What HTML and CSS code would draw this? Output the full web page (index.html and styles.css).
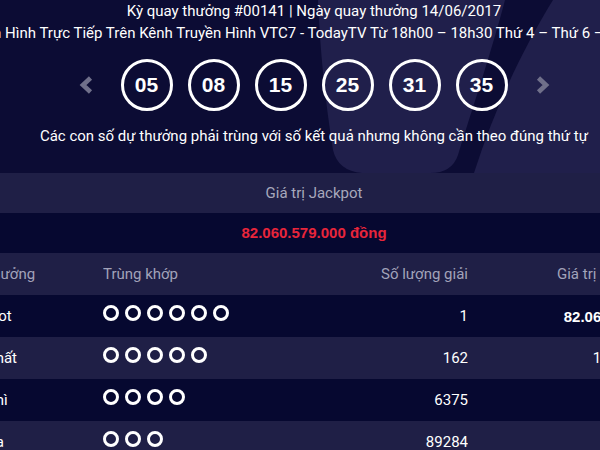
FILE: index.html
```html
<!DOCTYPE html>
<html lang="vi">
<head>
<meta charset="utf-8">
<title>Kết quả Vietlott</title>
<link rel="stylesheet" href="styles.css">
</head>
<body>
<div class="page">
  <section class="top">
    <svg class="deco" width="628" height="173" viewBox="0 0 628 173">
      <path d="M318,0 L505,0 C492,50 472,110 458,155 Q452,173 430,173 L362,173 Q338,171 333,150 C325,100 320,50 318,0 Z" fill="#201f4b"/>
      <path d="M553,0 L628,0 L628,173 L474,173 C494,110 522,50 553,0 Z" fill="#201f4b"/>
    </svg>
    <div class="title">Kỳ quay thưởng #00141 | Ngày quay thưởng 14/06/2017</div>
    <div class="subtitle"><span>Qua Hình Trực Tiếp Trên Kênh Truyền Hình VTC7 - TodayTV Từ 18h00 – 18h30 Thứ 4 – Thứ 6 – Chủ Nhật</span></div>
    <div class="nav">
      <svg class="chev" width="14" height="18" viewBox="0 0 14 18"><polyline points="11.5,2 4,9 11.5,16" fill="none" stroke="#70708a" stroke-width="4.6"/></svg>
      <div class="balls">
        <span class="ball">05</span>
        <span class="ball">08</span>
        <span class="ball">15</span>
        <span class="ball">25</span>
        <span class="ball">31</span>
        <span class="ball">35</span>
      </div>
      <svg class="chev" width="14" height="18" viewBox="0 0 14 18"><polyline points="2.5,2 10,9 2.5,16" fill="none" stroke="#70708a" stroke-width="4.6"/></svg>
    </div>
    <div class="note">Các con số dự thưởng phải trùng với số kết quả nhưng không cần theo đúng thứ tự</div>
  </section>
  <div class="jp-head">Giá trị Jackpot</div>
  <div class="jp-value">82.060.579.000 đồng</div>
  <table class="prizes">
    <colgroup>
      <col class="c1"><col class="c2"><col class="c3"><col class="c4">
    </colgroup>
    <thead>
      <tr><th class="name">Giải thưởng</th><th class="match">Trùng khớp</th><th class="num">Số lượng giải</th><th class="val-head">Giá trị giải (đồng)</th></tr>
    </thead>
    <tbody>
      <tr class="dark"><td class="name">Jackpot</td><td class="match"><span class="dot"></span><span class="dot"></span><span class="dot"></span><span class="dot"></span><span class="dot"></span><span class="dot"></span></td><td class="num">1</td><td class="val strong">82.060.579.000</td></tr>
      <tr class="light"><td class="name">Giải nhất</td><td class="match"><span class="dot"></span><span class="dot"></span><span class="dot"></span><span class="dot"></span><span class="dot"></span></td><td class="num">162</td><td class="val">10.000.000</td></tr>
      <tr class="dark"><td class="name">Giải nhì</td><td class="match"><span class="dot"></span><span class="dot"></span><span class="dot"></span><span class="dot"></span></td><td class="num">6375</td><td class="val">300.000</td></tr>
      <tr class="light"><td class="name">Giải ba</td><td class="match"><span class="dot"></span><span class="dot"></span><span class="dot"></span></td><td class="num">89284</td><td class="val">30.000</td></tr>
    </tbody>
  </table>
</div>
</body>
</html>
```
FILE: styles.css
```css
html, body {
  margin: 0;
  padding: 0;
}
body {
  background: #0c0c34;
  color: #ffffff;
  font-family: Roboto, "Liberation Sans", sans-serif;
  font-size: 15px;
  overflow: hidden;
  width: 600px;
  height: 450px;
}
.page {
  width: 628px;
  overflow: hidden;
}
.top {
  position: relative;
  overflow: hidden;
  padding-bottom: 26px;
}
.deco {
  position: absolute;
  left: 0;
  top: 0;
  z-index: 0;
}
.title, .subtitle, .nav, .note {
  position: relative;
  z-index: 1;
}
.title {
  line-height: 22px;
  text-align: center;
}
.subtitle {
  display: flex;
  justify-content: center;
  white-space: nowrap;
  line-height: 22px;
  padding-left: 16px;
}
.nav {
  display: flex;
  justify-content: center;
  align-items: center;
  gap: 28px;
  margin-top: 15px;
  height: 52px;
}
.balls {
  display: flex;
  gap: 15px;
}
.ball {
  width: 52px;
  height: 52px;
  box-sizing: border-box;
  border: 3px solid #ffffff;
  border-radius: 50%;
  display: flex;
  align-items: center;
  justify-content: center;
  font-family: "Liberation Sans", Arial, sans-serif;
  font-weight: bold;
  font-size: 21px;
}
.note {
  margin-top: 14px;
  line-height: 22px;
  text-align: center;
}
.jp-head {
  height: 40px;
  line-height: 40px;
  background: #1f1f46;
  color: #a7a8bc;
  text-align: center;
}
.jp-value {
  height: 40px;
  line-height: 40px;
  background: #060830;
  color: #e8253b;
  text-align: center;
  font-family: "Liberation Sans", Arial, sans-serif;
  font-weight: bold;
}
.prizes {
  width: 740px;
  margin-left: -56px;
  border-collapse: collapse;
  table-layout: fixed;
}
.c1 { width: 159px; }
.c2 { width: 200px; }
.c3 { width: 165px; }
.c4 { width: 216px; }
.prizes th, .prizes td {
  height: 42px;
  padding: 0;
  font-size: 15px;
  white-space: nowrap;
  vertical-align: middle;
  overflow: hidden;
}
.prizes thead tr {
  background: #1f1f46;
}
.prizes th {
  color: #a2a3ba;
  font-weight: normal;
  text-align: left;
}
.prizes .name {
  padding-left: 14px;
  text-align: left;
}
.prizes .num, .prizes .val {
  text-align: right;
}
.prizes .val {
  padding-right: 16px;
}
.prizes .val-head {
  padding-left: 89px;
  text-align: left;
}
.prizes tr.dark { background: #060830; }
.prizes tr.light { background: #1f1f46; }
.strong {
  font-family: "Liberation Sans", Arial, sans-serif;
  font-weight: bold;
}
.match {
  line-height: 0;
}
.prizes th.match {
  line-height: normal;
}
.dot {
  display: inline-block;
  width: 16px;
  height: 16px;
  box-sizing: border-box;
  border: 3px solid #ffffff;
  border-radius: 50%;
  margin-right: 6px;
  vertical-align: middle;
  position: relative;
  top: -3px;
}
```
